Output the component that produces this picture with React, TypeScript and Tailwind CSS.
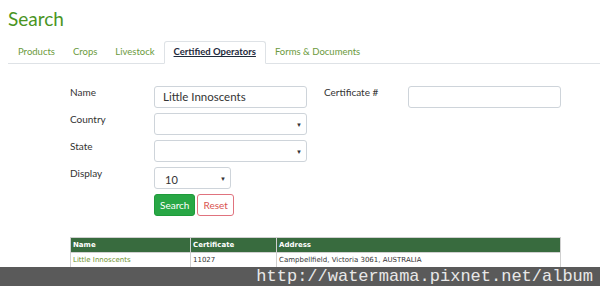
const tabs = ["Products", "Crops", "Livestock", "Certified Operators", "Forms & Documents"];

function Caret() {
  return <span className="absolute right-[4px] top-[8px] text-[6px] leading-none text-[#333]">▼</span>;
}

function SelectBox({ width, value }: { width: string; value?: string }) {
  return (
    <div className={`relative h-[22px] ${width} rounded-[3px] border border-[#ced4da] bg-white`}>
      {value && <span className="absolute left-[10px] top-[4px] text-[11px] text-[#333]">{value}</span>}
      <Caret />
    </div>
  );
}

export default function App() {
  return (
    <div className="relative h-[286px] w-[600px] overflow-hidden bg-white font-['Lato',sans-serif] text-[#333]">
      <h1 className="pl-[8px] pt-[6px] text-[19px] leading-[26px] text-[#4a951f]">Search</h1>

      <div className="ml-[8px] mt-[9px] flex h-[23px] border-b border-[#dee2e6] text-[9.5px]">
        {tabs.map((t, i) =>
          i === 3 ? (
            <div
              key={t}
              className="-mb-px flex items-center rounded-t-[3px] border border-b-white border-[#dee2e6] bg-white px-[9px] font-bold text-[#1e2a3b] underline"
            >
              {t}
            </div>
          ) : (
            <div key={t} className={`flex items-center ${i === 0 ? "pl-[10px]" : "pl-[9px]"} pr-[9px] text-[#6b9a3c]`}>
              {t}
            </div>
          )
        )}
      </div>

      <div className="ml-[70px] mt-[22px] flex text-[10px]">
        <div className="flex flex-col gap-[5px]">
          <div className="flex">
            <div className="w-[84px] -mt-[1px]">Name</div>
            <div className="flex h-[22px] w-[153px] items-center rounded-[3px] border border-[#ced4da] px-[8px] text-[11.5px]">
              Little Innoscents
            </div>
          </div>
          <div className="flex">
            <div className="w-[84px] -mt-[1px]">Country</div>
            <SelectBox width="w-[153px]" />
          </div>
          <div className="flex">
            <div className="w-[84px] -mt-[1px]">State</div>
            <SelectBox width="w-[153px]" />
          </div>
          <div className="flex">
            <div className="w-[84px] -mt-[1px]">Display</div>
            <SelectBox width="w-[77px]" value="10" />
          </div>
          <div className="flex gap-[2px] pl-[84px]">
            <button className="h-[22px] rounded-[3px] border border-[#1e9b3a] bg-[#28a745] px-[5px] text-[10px] text-white">
              Search
            </button>
            <button className="h-[22px] rounded-[3px] border border-[#e0737e] bg-white px-[5px] text-[10px] text-[#d9534f]">
              Reset
            </button>
          </div>
        </div>
        <div className="ml-[17px] flex items-start">
          <div className="w-[84px] -mt-[1px]">Certificate #</div>
          <div className="h-[22px] w-[153px] rounded-[3px] border border-[#ced4da]" />
        </div>
      </div>

      <table className="ml-[70px] mt-[21px] w-[491px] border-collapse font-['DejaVu_Sans',sans-serif] text-[7px]">
        <thead>
          <tr className="bg-[#386b3e] text-white">
            <th className="h-[15px] w-[120px] border border-[#d0d0d0] px-[2px] text-left font-bold">Name</th>
            <th className="w-[86px] border border-[#d0d0d0] px-[2px] text-left font-bold">Certificate</th>
            <th className="border border-[#d0d0d0] px-[2px] text-left font-bold">Address</th>
          </tr>
        </thead>
        <tbody>
          <tr>
            <td className="h-[16px] border border-[#d0d0d0] px-[2px] text-[#6b8f2c]">Little Innoscents</td>
            <td className="border border-[#d0d0d0] px-[2px]">11027</td>
            <td className="border border-[#d0d0d0] px-[2px]">Campbellfield, Victoria 3061, AUSTRALIA</td>
          </tr>
        </tbody>
      </table>

      <div className="absolute bottom-0 left-0 flex h-[19px] w-full items-center justify-end bg-[#5a5a5a] pr-[7px] font-['Liberation_Mono',monospace] text-[17px] text-[#e8e8e8]">
        http://watermama.pixnet.net/album
      </div>
    </div>
  );
}
